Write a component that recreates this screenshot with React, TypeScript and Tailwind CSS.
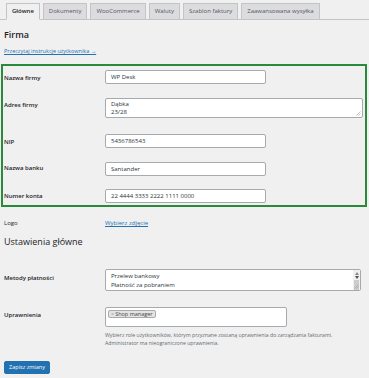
import React from "react";

const tabs = ["Główne", "Dokumenty", "WooCommerce", "Waluty", "Szablon faktury", "Zaawansowana wysyłka"];

function Grip() {
  return (
    <svg width="5" height="5" viewBox="0 0 5 5" className="absolute right-[1px] bottom-[1px]">
      <line x1="0.5" y1="4.5" x2="4.5" y2="0.5" stroke="#9a9a9a" strokeWidth="0.6" />
      <line x1="2.5" y1="4.5" x2="4.5" y2="2.5" stroke="#9a9a9a" strokeWidth="0.6" />
    </svg>
  );
}

function Input({ value }: { value: string }) {
  return (
    <div className="w-[161px] h-[14px] bg-white border border-[#a7aaad] rounded-[2px] flex items-center pl-[5px] text-[6px] text-[#2c3338]">
      {value}
    </div>
  );
}

function Row({ label, h, lpt, fpt, children }: { label: string; h: number; lpt: number; fpt: number; children: React.ReactNode }) {
  return (
    <div className="flex" style={{ height: h }}>
      <div className="w-[102px] pl-[1px] text-[6px] leading-[8px] font-semibold text-[#1d2327]" style={{ paddingTop: lpt }}>
        {label}
      </div>
      <div style={{ paddingTop: fpt }}>{children}</div>
    </div>
  );
}

export default function App() {
  return (
    <div className="w-[369px] h-[378px] bg-[#f0f0f1] overflow-hidden" style={{ fontFamily: '"Open Sans", "Noto Sans", sans-serif' }}>
      {/* Tabs */}
      <div className="h-[20px] pt-[3px] pl-[6px] flex gap-[3px] border-b border-[#c3c4c7]">
        {tabs.map((t, i) => (
          <div
            key={t}
            className={
              "h-[17px] px-[5px] flex items-center border border-[#c3c4c7] text-[6px] whitespace-nowrap " +
              (i === 0 ? "bg-[#f0f0f1] border-b-[#f0f0f1] text-[#1d2327] font-semibold" : "bg-[#dcdcde] text-[#50575e] h-[16px]")
            }
          >
            {t}
          </div>
        ))}
      </div>

      <div className="pl-[4px] pt-[9px] h-[27px] text-[9px] leading-[12px] font-semibold text-[#1d2327]">Firma</div>
      <div className="pl-[4px] h-[8px] text-[5.5px] leading-[8px] text-[#2271b1] underline">Przeczytaj instrukcje użytkownika →</div>

      {/* Green box */}
      <div className="mt-[9px] ml-[1px] w-[366px] h-[143px] border-2 border-[#2a8a3c]">
        <Row label="Nazwa firmy" h={28} lpt={8} fpt={4}>
          <Input value="WP Desk" />
        </Row>
        <Row label="Adres firmy" h={34} lpt={7} fpt={4}>
          <div className="relative w-[258px] h-[20px] bg-white border border-[#a7aaad] rounded-[2px] pl-[5px] pt-[1px] text-[6px] leading-[8px] text-[#2c3338]">
            <div>Dąbka</div>
            <div>23/28</div>
            <Grip />
          </div>
        </Row>
        <Row label="NIP" h={28} lpt={10} fpt={6}>
          <Input value="5436786543" />
        </Row>
        <Row label="Nazwa banku" h={28} lpt={8} fpt={6}>
          <Input value="Santander" />
        </Row>
        <Row label="Numer konta" h={21} lpt={8} fpt={5}>
          <Input value="22 4444 3333 2222 1111 0000" />
        </Row>
      </div>

      {/* Logo */}
      <div className="flex mt-[12px] h-[8px] text-[6px] leading-[8px]">
        <div className="w-[105px] pl-[4px] text-[#1d2327]">Logo</div>
        <div className="text-[#2271b1] underline">Wybierz zdjęcie</div>
      </div>

      <div className="pl-[4px] mt-[9px] h-[12px] text-[9px] leading-[12px] text-[#1d2327]">Ustawienia główne</div>

      {/* Metody płatności */}
      <div className="flex mt-[21px] h-[22px]">
        <div className="w-[105px] pl-[4px] pt-[5px] text-[6px] leading-[8px] font-semibold text-[#1d2327]">Metody płatności</div>
        <div className="relative w-[256px] h-[22px] bg-white border border-[#a7aaad] rounded-[2px] pl-[5px] pt-[2px] text-[6px] leading-[9px] text-[#2c3338]">
          <div>Przelew bankowy</div>
          <div>Płatność za pobraniem</div>
          <div className="absolute right-0 top-0 bottom-0 w-[7px] bg-[#f0f0f0] flex flex-col items-center pt-[2px]">
            <svg width="4" height="3" viewBox="0 0 4 3"><polygon points="2,0 4,3 0,3" fill="#8a8a8a" /></svg>
            <svg width="4" height="3" viewBox="0 0 4 3" className="mt-[1px]"><polygon points="0,0 4,0 2,3" fill="#505050" /></svg>
            <div className="mt-[1px] w-[5px] flex-1 bg-[#cdcdcd]" />
          </div>
          <Grip />
        </div>
      </div>

      {/* Uprawnienia */}
      <div className="flex mt-[16px] h-[20px]">
        <div className="w-[105px] pl-[4px] pt-[4px] text-[6px] leading-[8px] font-semibold text-[#1d2327]">Uprawnienia</div>
        <div className="w-[182px] h-[20px] bg-white border border-[#a7aaad] rounded-[2px] pl-[2px] pt-[2px] flex items-start">
          <div className="flex items-center h-[8px] px-[2px] bg-[#e4e4e4] border border-[#aaa] rounded-[2px] text-[5.5px] leading-[8px] text-[#444]">
            <span className="text-[#999] mr-[1px]">×</span>Shop manager
          </div>
        </div>
      </div>
      <div className="pl-[105px] pt-[4px] text-[5.2px] leading-[8px] text-[#646970]">
        <div>Wybierz role użytkowników, którym przyznane zostaną uprawnienia do zarządzania fakturami.</div>
        <div>Administrator ma nieograniczone uprawnienia.</div>
      </div>

      <div className="pl-[4px] mt-[14px]">
        <div className="w-[46px] h-[13px] bg-[#2271b1] border border-[#2271b1] rounded-[2px] flex items-center justify-center text-white text-[5.5px]">
          Zapisz zmiany
        </div>
      </div>
    </div>
  );
}
